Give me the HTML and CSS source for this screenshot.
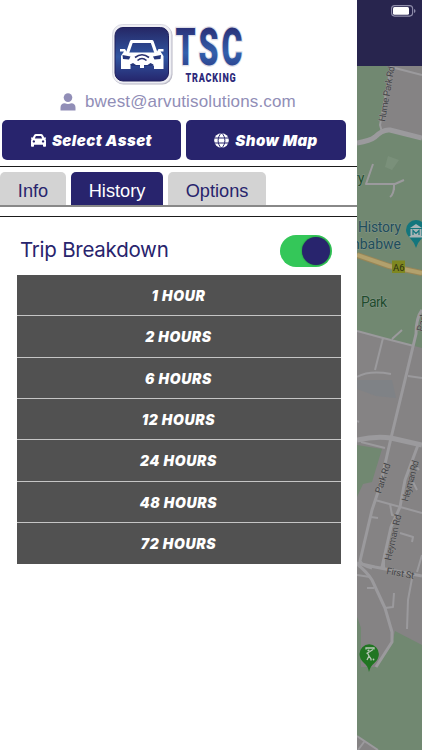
FILE: index.html
```
<!DOCTYPE html>
<html lang="en">
<head>
    <meta charset="UTF-8" />
    <meta name="viewport" content="width=device-width, initial-scale=1.0"/>
    <title>TSC Tracking</title>
    <link rel="stylesheet" href="styles.css">
</head>
<body>
<div class="app">
    <aside class="menu">
        <div class="logo">
            <svg width="140" height="66" viewBox="108 20 140 66">
                <defs>
                    <linearGradient id="badge" x1="0" y1="0" x2="0" y2="1">
                        <stop offset="0" stop-color="#252765"/>
                        <stop offset="0.55" stop-color="#3156a2"/>
                        <stop offset="1" stop-color="#25266d"/>
                    </linearGradient>
                    <linearGradient id="letters" x1="0" y1="0" x2="0" y2="1">
                        <stop offset="0.1" stop-color="#29296f"/>
                        <stop offset="0.6" stop-color="#3260ac"/>
                        <stop offset="1" stop-color="#29317c"/>
                    </linearGradient>
                </defs>
                <rect x="113.500" y="25.500" width="59" height="59" rx="10" fill="#b9b8c4"/>
                <rect x="112.500" y="24.500" width="59" height="59" rx="10" fill="#eeeef3" stroke="#cfceda" stroke-width="0.7"/>
                <rect x="115" y="27.500" width="53.500" height="53.500" rx="8" fill="url(#badge)" stroke="#20205c"/>
                <path d="M127.500 53l4-11.500h20.500l4 11.500" fill="none" stroke="#fff" stroke-width="3.200" stroke-linejoin="round"/>
                <path d="M120 49h5l2 3.500h29.500l2-3.500h5v2.500h-3l3 4.500v13h-9.500v-3.500h-23.500v3.500h-9.500v-13l3-4.500h-4z" fill="#fff"/>
                <path d="M122.500 55l8 1.500-1.500 3-6-.5zM161 55l-8 1.500 1.500 3 6-.5zM130 64.500l3-1.500 3 2h11.500l3-2 3 1.500-1 1.500h-21.500z" fill="#253579"/>
                <path d="M135 57.500q7-5.500 14 0M137.500 60.500q4.500-4 9 0" fill="none" stroke="#29306e" stroke-width="1.600"/>
                <path d="M140 64q2-2 4 0v4h-4z" fill="#fff"/>
                <text class="logo-name" x="175.500" y="64.500" textLength="70" lengthAdjust="spacingAndGlyphs">TSC</text>
                <text class="logo-sub" x="185.500" y="81.500" textLength="51" lengthAdjust="spacingAndGlyphs">TRACKING</text>
            </svg>
        </div>

        <div class="user">
            <svg width="16" height="18" viewBox="0 0 16 18"><circle cx="8" cy="4.600" r="4.300"/><path d="M.5 17.500v-2.700q0-4.300 4.300-4.500q3.200 1.500 6.400 0q4.300.2 4.300 4.500v2.700z"/></svg>
            <span>bwest@arvutisolutions.com</span>
        </div>

        <div class="actions">
            <button class="btn btn-asset">
                <svg width="15" height="13" viewBox="0 0 15 13"><path fill-rule="evenodd" d="M0 3.500h1.800L3 1.200Q3.600 0 5 0h5q1.400 0 2 1.200l1.200 2.300H15v1.300h-1q1 .7 1 2V12q0 .8-.8.800h-1.400q-.8 0-.8-.8v-1.200H3V12q0 .8-.8.800H.8Q0 12.800 0 12V6.800q0-1.300 1-2H0zM3.800 4.500h7.400l-1.100-2.400H4.900zM2.800 6.300a1.200 1.100 0 1 0 .1 0zM12 6.300a1.200 1.100 0 1 0 .1 0z"/></svg>
                <span>Select Asset</span>
            </button>
            <button class="btn btn-map">
                <svg width="15" height="15" viewBox="0 0 15 15"><circle cx="7.500" cy="7.500" r="7.300"/><path class="globe-lines" d="M0 5h15M0 10h15M7.500 0C3 3.500 3 11.500 7.500 15M7.500 0C12 3.500 12 11.500 7.500 15"/></svg>
                <span>Show Map</span>
            </button>
        </div>

        <nav class="tabs">
            <a class="tab tab-info">Info</a>
            <a class="tab tab-history active">History</a>
            <a class="tab tab-options">Options</a>
        </nav>

        <div class="trip">
            <span class="trip-title">Trip Breakdown</span>
            <span class="switch"><span class="knob"></span></span>
        </div>

        <ul class="hours">
            <li>1 HOUR</li>
            <li>2 HOURS</li>
            <li>6 HOURS</li>
            <li>12 HOURS</li>
            <li>24 HOURS</li>
            <li>48 HOURS</li>
            <li>72 HOURS</li>
        </ul>
    </aside>

    <main class="page">
        <header class="topbar">
            <svg width="26" height="12" viewBox="0 0 26 12">
                <rect x="0.600" y="0.600" width="21" height="10.500" rx="3" fill="none" stroke="#908eab" stroke-width="1.100"/>
                <rect x="2" y="2" width="16" height="7.700" rx="1.500" fill="#fff"/>
                <path d="M23 4v4q1.500-.5 1.500-2t-1.500-2z" fill="#908eab"/>
            </svg>
        </header>
        <svg class="map" width="65" height="684" viewBox="357 66 65 684">
            <rect x="357" y="66" width="65" height="684" fill="#858384"/>
            <g fill="#718871">
                <path d="M357 66h34l-11 62 6 2 36 8v210l-65-17z"/>
                <path d="M357 445l25 4-10 33-9 2-6 13z"/>
                <path d="M357 617l4 11v39h15l16-23 3-13 27 14v105h-44l-21-14z"/>
            </g>
            <path d="M391 66l-11 62 5 1 15 0 22 7v-70z" fill="#858384"/>
            <path d="M361 628l6 27 9 12 16-23v-12l-14-30h-21v15z" fill="#858384"/>
            <path d="M357 617l4 11v28l-4 3z" fill="#718871"/>
            <path d="M357 380h35l4 18-20-2-19-7z" fill="#7f8286"/>
            <path d="M388 156l11 4-7 10-7-3z" fill="#7a907a"/>
            <g class="road">
                <path d="M391 66l-11 59 2 7M391 67l31 8M373 164l-7 20h29l9-4M394 184v6M394 186q0 8-4 11"/>
                <path d="M357 331l26 7 31 8M383 338l-8 32M402 330l-10 9M357 377q12-7 34-3M408 376l14 2M357 421l2 1"/>
                <path d="M361 442l24 6M375 500l47 13M371 517l7 1M390 504l2 11 6 1M400 533l13 4-1 5M412 480l5 10M414 464l5 6"/>
                <path d="M385 608l8-1 1-14M413 573l-5 27-1 29M367 588h7M384 560v8M422 555l-5 17M357 575l13 2M357 736l21 14M364 742l-6 8"/>
            </g>
            <g class="road road-mid">
                <path d="M422 310q-6 8-6 24l-11 46-14 58-11 48-8 24-12 51q2 5 12 7"/>
                <path d="M418 445l-13 35-5 27-9 20-9 40M357 563l18 4 47 9M357 564q10 8 15 16l13 28 7 24v10l-16 25"/>
            </g>
            <g class="road road-main">
                <path d="M357 143q13-2 18-6 8-8 15-7l32 8M357 440q18-4 34-2l31 7"/>
            </g>
            <path class="highway-edge" d="M357 255l32 11 33 7"/>
            <path class="highway" d="M357 255l32 11 33 7"/>
            <rect x="392" y="260.500" width="13" height="12.500" fill="#7e8720"/>
            <g class="labels">
                <text class="route" x="393" y="270.500">A6</text>
                <text transform="translate(385 122) rotate(-80)" textLength="56">Hume Park Rd</text>
                <text transform="translate(381 494) rotate(-72)" textLength="31">Park Rd</text>
                <text transform="translate(408 502) rotate(-75)" textLength="42">Heyman Rd</text>
                <text transform="translate(391 561) rotate(-77)" textLength="47">Heyman Rd</text>
                <text transform="translate(423 332) rotate(-76)">Park</text>
                <text transform="translate(386 574) rotate(10)" textLength="28">First St</text>
            </g>
            <g class="places">
                <text class="park" x="353" y="183">ry</text>
                <text class="park" x="361" y="307" textLength="26">Park</text>
                <text x="358" y="232" textLength="43">History</text>
                <text x="401" y="249" text-anchor="end">mbabwe</text>
            </g>
            <path d="M416 248q-2-6-6-10-4-4-4-8a10 10 0 0 1 20 0q0 4-4 8-4 4-6 10z" fill="#13767d"/>
            <path d="M410 228l6-4 6 4zM410.500 229h11v7h-11zM409.500 236h13v1.500h-13z" fill="#a9b5b6"/>
            <path d="M413 235v-4.500l3 3 3-3v4.500" fill="none" stroke="#13767d" stroke-width="1.200"/>
            <path d="M369 672q-1-6-5-9-4.500-4-4.500-9a9.700 9.700 0 0 1 19.400 0q0 5-4.500 9-4 3-5.400 9z" fill="#207522"/>
            <g class="golfer">
                <path d="M366 649.500v-1.500h8v1.500M366.500 653.500l3.500-2 3-2M367.500 653l1.500 3-2 4M369 656l2 3v1.500"/>
                <circle cx="368.500" cy="650.500" r="1.100"/>
                <circle cx="373.500" cy="659.500" r="0.900"/>
            </g>
        </svg>
    </main>
</div>
</body>
</html>
```
FILE: styles.css
```
* {
    box-sizing: border-box;
}

body {
    margin: 0;
    font-family: "Liberation Sans", Arial, sans-serif;
    background: #fff;
    color: #28246d;
}

.app {
    display: flex;
    width: 422px;
    height: 750px;
    overflow: hidden;
}

svg {
    display: block;
    flex: none;
}

.menu {
    width: 357px;
    flex: none;
    background: #fff;
}

.logo {
    height: 90px;
    padding: 20px 0 0 108px;
}

.logo svg {
    overflow: visible;
}

.logo-name {
    font: 900 51px Roboto, sans-serif;
    letter-spacing: 5px;
    fill: url(#letters);
    stroke: #dedee8;
    stroke-width: 2.5px;
    paint-order: stroke;
}

.logo-sub {
    font: 900 13.5px Roboto, sans-serif;
    letter-spacing: 1.2px;
    fill: #2e2a7b;
}

.user {
    display: flex;
    align-items: center;
    gap: 9px;
    height: 30px;
    padding: 0 0 6px 60px;
    font-size: 17px;
    letter-spacing: 0.15px;
    color: #918eb7;
    fill: #918eb7;
}

.actions {
    display: flex;
    gap: 5px;
    height: 47px;
    padding: 0 0 6px 2px;
    border-bottom: 1px solid #1b1b1b;
}

.btn {
    display: flex;
    align-items: center;
    justify-content: center;
    gap: 6px;
    height: 40px;
    padding: 0;
    border: none;
    border-radius: 5px;
    background: #28246d;
    color: #fff;
    fill: #fff;
    font: italic 900 15px Inter, sans-serif;
    letter-spacing: 0.45px;
    white-space: nowrap;
}

.btn-asset {
    width: 179px;
}

.btn-map {
    width: 160px;
}

.globe-lines {
    fill: none;
    stroke: #28246d;
    stroke-width: 1;
}

.tabs {
    display: flex;
    gap: 5px;
    height: 50px;
    padding-top: 5px;
    border-bottom: 1px solid #1b1b1b;
    background: linear-gradient(#888, #888) 0 38px / 100% 2px no-repeat;
}

.tab {
    height: 33px;
    border-radius: 5px 5px 0 0;
    background: #d3d3d3;
    font-size: 18.2px;
    line-height: 38px;
    text-align: center;
}

.tab-info {
    width: 66px;
}

.tab-history {
    width: 92px;
}

.tab-options {
    width: 98px;
}

.tab.active {
    background: #28246d;
    color: #fff;
}

.trip {
    display: flex;
    align-items: center;
    justify-content: space-between;
    height: 58px;
    padding: 10px 25px 0 20px;
}

.trip-title {
    padding-bottom: 3px;
    font: 20.5px Inter, sans-serif;
    letter-spacing: -0.25px;
}

.switch {
    display: flex;
    justify-content: flex-end;
    width: 52px;
    height: 32px;
    padding: 2px;
    border-radius: 16px;
    background: #34c759;
}

.knob {
    width: 28px;
    height: 28px;
    border-radius: 50%;
    background: #28246d;
    box-shadow: 0 0 2px rgba(0, 0, 0, 0.4);
}

.hours {
    width: 324px;
    margin: 0 0 0 16.5px;
    padding: 0;
    list-style: none;
    color: #fff;
    font: italic 900 14px Inter, sans-serif;
    letter-spacing: 0.65px;
    text-align: center;
}

.hours li {
    height: 41.35px;
    border-bottom: 1px solid #c5c5c5;
    background: #515151;
    line-height: 42px;
}

.hours li:last-child {
    border-bottom: none;
}

.page {
    width: 65px;
    flex: none;
}

.topbar {
    height: 66px;
    padding: 5px 0 0 34px;
    background: #28254e;
}

.road {
    fill: none;
    stroke: #9b9a9d;
    stroke-width: 2;
    stroke-linejoin: round;
}

.road-mid {
    stroke-width: 3;
}

.road-main {
    stroke-width: 5;
}

.highway-edge {
    fill: none;
    stroke: #998656;
    stroke-width: 6;
}

.highway {
    fill: none;
    stroke: #b2a16d;
    stroke-width: 4;
}

.labels text {
    font-family: Roboto, sans-serif;
    font-size: 9.5px;
    fill: #454549;
    stroke: #92918f;
    stroke-width: 0.8px;
    paint-order: stroke;
}

.labels .route {
    fill: #2e3010;
    stroke: none;
}

.places text {
    font: 14px Roboto, sans-serif;
    fill: #204d5b;
    stroke: #87978a;
    stroke-width: 1px;
    paint-order: stroke;
}

.places .park {
    fill: #1f4c2c;
}

.golfer {
    fill: #b7c7b7;
}

.golfer path {
    fill: none;
    stroke: #b7c7b7;
    stroke-width: 1.3;
}
```
